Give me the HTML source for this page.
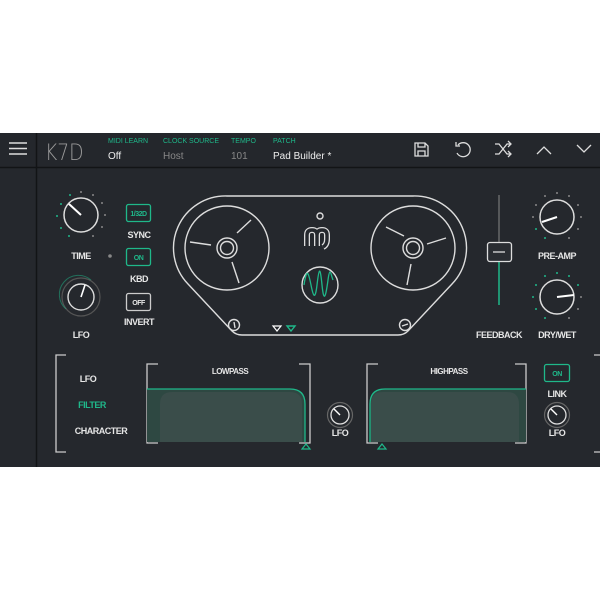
<!DOCTYPE html>
<html><head><style>
html,body{margin:0;padding:0;background:#fff;width:600px;height:600px;overflow:hidden}
svg{display:block}
.l{font-family:"Liberation Sans",sans-serif;font-weight:bold;font-size:9px;fill:#e6e6e6;text-anchor:middle;letter-spacing:-0.5px}
.s{font-family:"Liberation Sans",sans-serif;font-size:7px;fill:#1fb88a}
.v{font-family:"Liberation Sans",sans-serif;font-size:10px;fill:#eee}
</style></head><body>
<svg width="600" height="600" viewBox="0 0 600 600">
<rect x="0" y="133" width="600" height="334" fill="#25282d"/>
<rect x="0" y="133" width="600" height="34" fill="#24272c"/>
<line x1="0" y1="167.5" x2="600" y2="167.5" stroke="#121416" stroke-width="1.5"/>
<line x1="36.5" y1="133" x2="36.5" y2="467" stroke="#121416" stroke-width="1.5"/>
<g stroke="#ddd" stroke-width="1.6"><line x1="9" y1="143" x2="27" y2="143"/><line x1="9" y1="148.5" x2="27" y2="148.5"/><line x1="9" y1="154" x2="27" y2="154"/></g>
<text x="45" y="160" font-family="DejaVu Sans,sans-serif" font-size="22" fill="#9a9a9a" font-weight="200" style="font-weight:200" transform="translate(45 0) scale(0.85 1) translate(-45 0)">K7D</text>
<text class="s" x="108" y="143">MIDI LEARN</text><text class="v" x="108" y="159">Off</text>
<text class="s" x="163" y="143">CLOCK SOURCE</text><text class="v" x="163" y="159" style="fill:#888">Host</text>
<text class="s" x="231" y="143">TEMPO</text><text class="v" x="231" y="159" style="fill:#888">101</text>
<text class="s" x="273" y="143">PATCH</text><text class="v" x="273" y="159">Pad Builder *</text>
<g fill="none" stroke="#ddd" stroke-width="1.3">
<path d="M415 143h10l3 3v10h-13z M418 143v4h7v-4 M418 156v-5h7v5"/>
<path d="M458 145a7 7 0 1 1 -1 8 M456 142v4h4"/>
<path d="M495 144h4l8 10h4 M495 154h4l8-10h4 M508 141l3 3-3 3 M508 151l3 3-3 3"/>
<path d="M537 154l7-7 7 7"/>
<path d="M577 145l7 7 7-7"/>
</g>
<g><circle cx="81" cy="192" r="1" fill="#888"/><circle cx="93" cy="195" r="1" fill="#888"/><circle cx="102" cy="203" r="1" fill="#888"/><circle cx="105" cy="215" r="1" fill="#888"/><circle cx="102" cy="227" r="1" fill="#888"/><circle cx="93" cy="236" r="1" fill="#888"/><circle cx="69" cy="236" r="1" fill="#1fb88a"/><circle cx="61" cy="228" r="1" fill="#1fb88a"/><circle cx="57" cy="216" r="1" fill="#1fb88a"/><circle cx="61" cy="204" r="1" fill="#1fb88a"/><circle cx="70" cy="195" r="1" fill="#1fb88a"/></g>
<circle cx="81" cy="215" r="17" fill="none" stroke="#ddd" stroke-width="1.5"/>
<line x1="81" y1="215" x2="69" y2="204" stroke="#fff" stroke-width="2"/>
<text class="l" x="81" y="259">TIME</text>
<circle cx="110" cy="256" r="1.8" fill="#888"/>
<circle cx="81" cy="297" r="19" fill="none" stroke="#555" stroke-width="1.2"/>
<path d="M66 309a19 19 0 0 1 25-29" fill="none" stroke="#1fb88a" stroke-width="1" opacity=".5"/>
<circle cx="81" cy="297" r="13" fill="none" stroke="#ddd" stroke-width="1.4"/>
<line x1="81" y1="297" x2="85" y2="285" stroke="#fff" stroke-width="1.6"/>
<text class="l" x="81" y="338">LFO</text>
<rect x="126.5" y="204.5" width="24" height="17" rx="2" fill="none" stroke="#1fb88a" stroke-width="1.3"/>
<text class="l" x="138.5" y="216" style="font-size:7px;fill:#1fb88a">1/32D</text>
<text class="l" x="139" y="238">SYNC</text>
<rect x="126.5" y="248.5" width="24" height="17" rx="2" fill="none" stroke="#1fb88a" stroke-width="1.3"/>
<text class="l" x="138.5" y="260" style="font-size:7px;fill:#1fb88a">ON</text>
<text class="l" x="139" y="282">KBD</text>
<rect x="126.5" y="293.5" width="24" height="17" rx="2" fill="none" stroke="#ccc" stroke-width="1.3"/>
<text class="l" x="138.5" y="305" style="font-size:7px">OFF</text>
<text class="l" x="139" y="325">INVERT</text>
<g fill="none" stroke="#ddd" stroke-width="1.4">
<path d="M227 196 L413 196 A52 52 0 0 1 452 284 L408 331 Q404 335 398 335 L242 335 Q236 335 232 331 L188 284 A52 52 0 0 1 227 196 Z"/>
<circle cx="227" cy="248" r="42"/><circle cx="227" cy="248" r="10"/><circle cx="227" cy="248" r="6.5"/>
<line x1="237" y1="233" x2="251" y2="220"/><line x1="211" y1="245" x2="190" y2="242"/><line x1="232" y1="262" x2="239" y2="283"/>
<circle cx="413" cy="248" r="42"/><circle cx="413" cy="248" r="10"/><circle cx="413" cy="248" r="6.5"/>
<line x1="404" y1="236" x2="386" y2="227"/><line x1="427" y1="244" x2="446" y2="238"/><line x1="411" y1="264" x2="407" y2="285"/>
<circle cx="320" cy="285" r="18"/>
<circle cx="320" cy="216" r="3"/>
<circle cx="234" cy="325" r="5.5"/><line x1="234" y1="322" x2="235" y2="328"/>
<circle cx="405" cy="325" r="5.5"/><line x1="402" y1="326" x2="408" y2="324"/>
</g>
<path d="M307 246V235q0-5 5-5t5 5v11M317 235q0-5 5-5t5 5v4q0 6 -4 8" fill="none" stroke="#ddd" stroke-width="6" stroke-linejoin="round"/>
<path d="M307 246V235q0-5 5-5t5 5v11M317 235q0-5 5-5t5 5v4q0 6 -4 8" fill="none" stroke="#25282d" stroke-width="3.4" stroke-linejoin="round"/>
<path d="M304 285c3 -20 5 -10 7 0s4 17 6 0 3-20 5 0 4 10 6 -5 3-5 5 0" fill="none" stroke="#1fb88a" stroke-width="1.3"/>
<path d="M273 326h8l-4 5z" fill="none" stroke="#fff" stroke-width="1.2"/>
<path d="M287 326h8l-4 5z" fill="none" stroke="#1fb88a" stroke-width="1.4"/>
<line x1="499" y1="195" x2="499" y2="262" stroke="#777" stroke-width="1.2"/>
<line x1="499" y1="262" x2="499" y2="305" stroke="#1fb88a" stroke-width="1.5"/>
<rect x="487.5" y="242.5" width="24" height="19" rx="2.5" fill="#2a2d32" stroke="#ddd" stroke-width="1.3"/>
<line x1="493" y1="252" x2="505" y2="252" stroke="#ddd" stroke-width="1.3"/>
<text class="l" x="499" y="338">FEEDBACK</text>
<g fill="#888"><circle cx="557" cy="193" r="1"/><circle cx="569" cy="196" r="1"/><circle cx="578" cy="205" r="1"/><circle cx="581" cy="217" r="1"/><circle cx="578" cy="229" r="1"/><circle cx="569" cy="238" r="1"/><circle cx="545" cy="196" r="1"/><circle cx="536" cy="205" r="1"/><circle cx="533" cy="217" r="1"/><circle cx="536" cy="229" r="1" fill="#1fb88a"/><circle cx="545" cy="238" r="1" fill="#1fb88a"/></g>
<circle cx="557" cy="217" r="17" fill="none" stroke="#ddd" stroke-width="1.5"/>
<line x1="557" y1="217" x2="542" y2="222" stroke="#fff" stroke-width="2"/>
<text class="l" x="557" y="259">PRE-AMP</text>
<g fill="#1fb88a"><circle cx="557" cy="273" r="1"/><circle cx="569" cy="276" r="1"/><circle cx="578" cy="285" r="1"/><circle cx="581" cy="297" r="1" fill="#888"/><circle cx="578" cy="309" r="1" fill="#888"/><circle cx="569" cy="318" r="1" fill="#888"/><circle cx="545" cy="276" r="1"/><circle cx="536" cy="285" r="1"/><circle cx="533" cy="297" r="1"/><circle cx="536" cy="309" r="1"/><circle cx="545" cy="318" r="1"/></g>
<circle cx="557" cy="297" r="17" fill="none" stroke="#ddd" stroke-width="1.5"/>
<line x1="557" y1="297" x2="574" y2="295" stroke="#fff" stroke-width="2"/>
<text class="l" x="557" y="338">DRY/WET</text>
<g fill="none" stroke="#ccc" stroke-width="1.3">
<path d="M66 355h-10v97h10"/><path d="M600 355h-6M600 452h-6"/>
<path d="M158 364h-11v79h11"/><path d="M299 364h11v79h-11"/>
<path d="M378 364h-11v79h11"/><path d="M515 364h11v79h-11"/>
</g>
<text class="l" x="88" y="382">LFO</text>
<text class="l" x="92" y="408" style="fill:#1fb88a">FILTER</text>
<text class="l" x="101" y="434">CHARACTER</text>
<text class="l" x="230" y="374" style="font-size:8px">LOWPASS</text>
<text class="l" x="449" y="374" style="font-size:8px">HIGHPASS</text>
<path d="M147 389H292q13 0 13 13V442H147z" fill="#2e4842"/>
<path d="M160 442V404q0-12 12-12H290q12 0 12 12V442z" fill="#3a4d4a"/>
<path d="M147 389H290q15 0 15 15V442" fill="none" stroke="#1fb88a" stroke-width="1.3"/>
<path d="M302 449h8l-4-5z" fill="none" stroke="#1fb88a" stroke-width="1.2"/>
<path d="M526 389H385q-15 0-15 15V442H526z" fill="#2e4842"/>
<path d="M371 442V404q0-12 12-12H507q12 0 12 12V442z" fill="#3a4d4a"/>
<path d="M526 389H385q-15 0-15 15V442" fill="none" stroke="#1fb88a" stroke-width="1.3"/>
<path d="M378 449h8l-4-5z" fill="none" stroke="#1fb88a" stroke-width="1.2"/>
<circle cx="340" cy="415" r="12.5" fill="none" stroke="#666" stroke-width="1.2"/>
<circle cx="340" cy="415" r="9" fill="none" stroke="#ddd" stroke-width="1.3"/>
<line x1="340" y1="415" x2="334" y2="409" stroke="#fff" stroke-width="1.4"/>
<text class="l" x="340" y="436">LFO</text>
<rect x="544.5" y="364.5" width="25" height="17" rx="2" fill="none" stroke="#1fb88a" stroke-width="1.3"/>
<text class="l" x="557" y="376" style="font-size:7px;fill:#1fb88a">ON</text>
<text class="l" x="557" y="397">LINK</text>
<circle cx="557" cy="415" r="12.5" fill="none" stroke="#666" stroke-width="1.2"/>
<circle cx="557" cy="415" r="9" fill="none" stroke="#ddd" stroke-width="1.3"/>
<line x1="557" y1="415" x2="551" y2="409" stroke="#fff" stroke-width="1.4"/>
<text class="l" x="557" y="436">LFO</text>
</svg>
</body></html>
